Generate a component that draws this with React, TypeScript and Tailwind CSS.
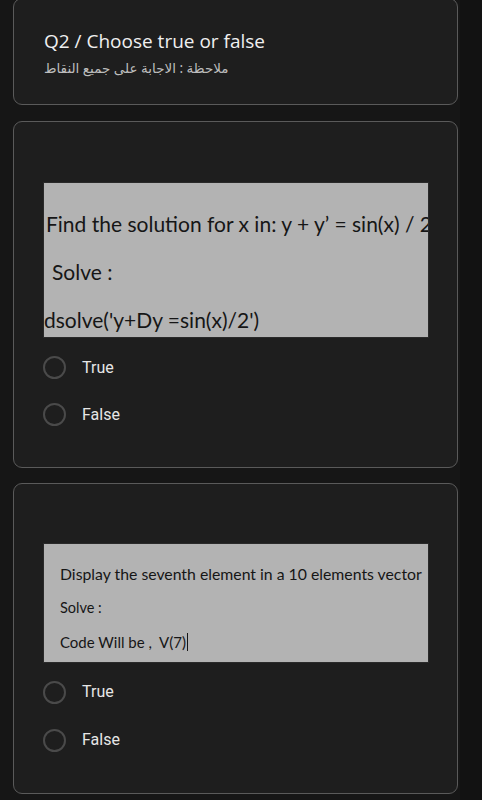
const Radio = ({ label }: { label: string }) => (
  <div className="flex items-center h-full">
    <span className="w-[23px] h-[23px] rounded-full border-2 border-[#4a4a4a] shrink-0" />
    <span className="ml-[16px] text-[16px] text-[#e6e6e6] font-['Roboto',sans-serif]">{label}</span>
  </div>
);

export default function App() {
  return (
    <div className="w-[482px] h-[800px] bg-[#161616] flex overflow-hidden">
      <div className="w-[460px] pl-[13px] flex flex-col">
        {/* header card */}
        <div className="mt-[-2px] w-[445px] h-[107px] bg-[#1e1e1e] border border-[#5a5a5a] rounded-[9px] pl-[30px] pt-[30px]">
          <div className="text-[19px] font-medium text-[#f0f0f0] font-['Open_Sans',sans-serif] leading-[24px]">
            Q2 / Choose true or false
          </div>
          <div
            dir="rtl"
            className="mt-[6px] w-fit text-[13.5px] text-[#bdbdbd] font-['Noto_Sans','DejaVu_Sans',sans-serif] leading-[18px]"
          >
            ملاحظة : الاجابة على جميع النقاط
          </div>
        </div>

        {/* question 1 */}
        <div className="mt-[16px] w-[445px] h-[347px] bg-[#1e1e1e] border border-[#5a5a5a] rounded-[9px] pl-[29px] pt-[60px]">
          <div className="w-[386px] h-[156px] bg-[#b3b3b3] border border-[#2a2a2a] overflow-hidden font-['Lato','Open_Sans',sans-serif] text-[#161616] pt-[17px] whitespace-nowrap">
            <div className="h-[48px] flex items-center pl-[2px] text-[21px]">
              Find the solution for x in: y + y’ = sin(x) / 2
            </div>
            <div className="h-[48px] flex items-center pl-[8px] text-[21px]">Solve :</div>
            <div className="h-[48px] flex items-center pl-[0px] text-[21px]">dsolve('y+Dy =sin(x)/2')</div>
          </div>
          <div className="mt-[6px] h-[47px]">
            <Radio label="True" />
          </div>
          <div className="h-[47px]">
            <Radio label="False" />
          </div>
        </div>

        {/* question 2 */}
        <div className="mt-[15px] w-[445px] h-[311px] bg-[#1e1e1e] border border-[#5a5a5a] rounded-[9px] pl-[29px] pt-[59px]">
          <div className="w-[386px] h-[120px] bg-[#b3b3b3] border border-[#2a2a2a] overflow-hidden font-['Lato','Open_Sans',sans-serif] text-[#161616] pt-[13px] whitespace-nowrap">
            <div className="h-[34px] flex items-center pl-[16px] text-[15.8px]">
              Display the seventh element in a 10 elements vector
            </div>
            <div className="h-[34px] flex items-center pl-[16px] text-[14.5px]">Solve :</div>
            <div className="h-[34px] flex items-center pl-[16px] text-[15px]">
              Code Will be ,&nbsp; V(7)<span className="ml-[1px] inline-block w-[1px] h-[18px] bg-[#161616]" />
            </div>
          </div>
          <div className="mt-[5px] h-[48px]">
            <Radio label="True" />
          </div>
          <div className="h-[48px]">
            <Radio label="False" />
          </div>
        </div>
      </div>
      <div className="flex-1 bg-[#121212]" />
    </div>
  );
}
